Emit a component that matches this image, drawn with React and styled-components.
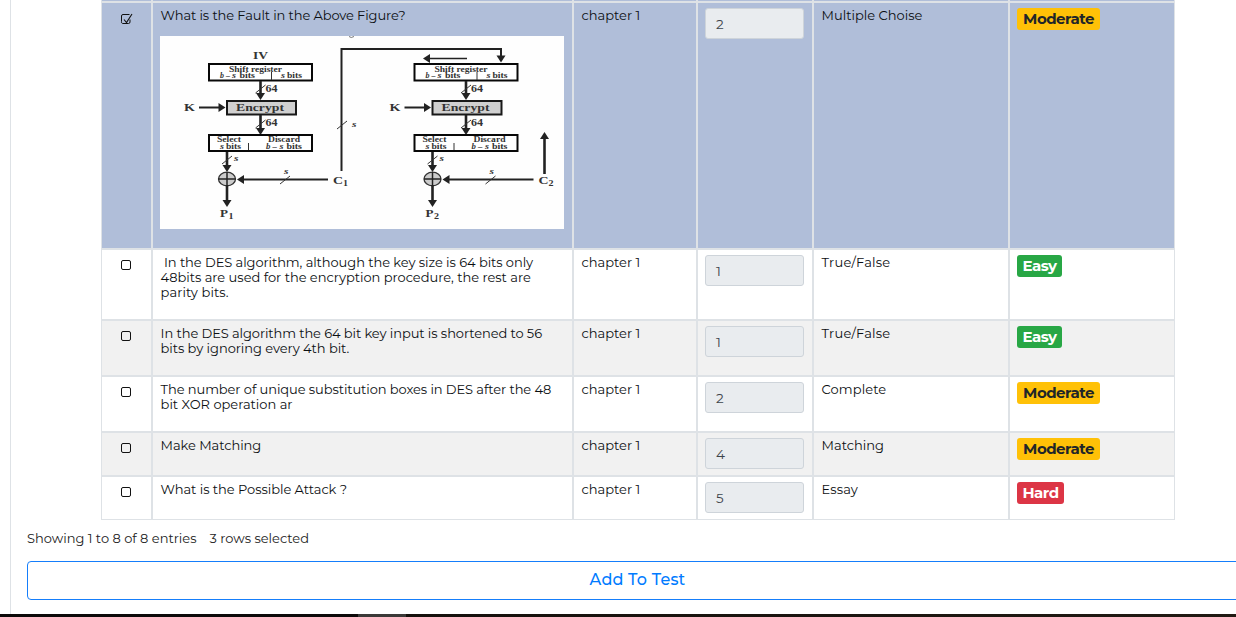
import React from "react";
import styled, { createGlobalStyle } from "styled-components";

const GlobalStyle = createGlobalStyle`
  *, *::before, *::after { box-sizing: border-box; }
  html, body { margin: 0; padding: 0; overflow: hidden; background: #fff; }
  body { font-family: Montserrat, Inter, "Liberation Sans", sans-serif; font-size: 13px; font-weight: 400; line-height: 15px; color: #0c0f12; }
`;

const Page = styled.div`
  width: 1236px;
  height: 617px;
  overflow: hidden;
  display: flex;
  flex-direction: column;
`;

const Card = styled.main`
  flex: 1;
  min-height: 0;
  margin-left: 10px;
  padding-left: 16px;
  border-left: 1px solid #dee2e6;
`;

const Table = styled.div`
  width: 1074px;
  margin-left: 74px;
`;

const PreviousRowEdge = styled.div`
  height: 2px;
  display: grid;
  grid-template-columns: 51px 421px 124px 116px 196px 166px;
  background: #b0bed9;
`;

const EdgeCell = styled.div`
  border: 1px solid #dee2e6;
  border-top: 0;
`;

const Row = styled.div`
  display: grid;
  grid-template-columns: 51px 421px 124px 116px 196px 166px;
  height: ${(p) => p.$height}px;
  background: ${(p) => (p.$selected ? "#b0bed9" : p.$striped ? "#f1f1f1" : "#fff")};
`;

const Cell = styled.div`
  border: 1px solid #dee2e6;
  padding: 5px 7px;
  min-width: 0;
`;

const CheckCell = styled(Cell)`
  padding: 10px 0 0 18px;
`;

const Line = styled.div`
  padding-left: ${(p) => p.$inset ?? 0.6}px;
  white-space: pre;
  letter-spacing: ${(p) => p.$track ?? 0}px;
`;

const ScoreInput = styled.div`
  width: 99px;
  height: 31px;
  padding: 8px 10px;
  border: 1px solid #ced4da;
  border-radius: 3px;
  background: #e9ecef;
  color: #3d444b;
  font-size: 13.5px;
`;

const levelColors = {
  Easy: { bg: "#28a745", fg: "#fff", width: 45 },
  Moderate: { bg: "#ffc107", fg: "#212529", width: 83 },
  Hard: { bg: "#dc3545", fg: "#fff", width: 47 },
};

const Badge = styled.span`
  display: flex;
  align-items: center;
  justify-content: center;
  width: ${(p) => levelColors[p.$level].width}px;
  height: 22px;
  padding-bottom: 1px;
  border-radius: 3px;
  background: ${(p) => levelColors[p.$level].bg};
  color: ${(p) => levelColors[p.$level].fg};
  font-size: 15px;
  font-weight: 700;
  letter-spacing: -0.5px;
`;

const Picture = styled.svg`
  display: block;
  width: 404px;
  height: 193px;
  margin-top: 13px;
  background: #fefefe;
  font-family: "Liberation Serif", serif;
  font-weight: 700;
  letter-spacing: 0;
`;

const CheckIcon = styled.svg`
  display: block;
  width: 13px;
  height: 12px;
`;

const Info = styled.div`
  display: flex;
  gap: 13px;
  margin-top: 11px;
  color: #222;
`;

const AddButton = styled.button`
  display: block;
  width: 1221px;
  height: 39px;
  margin-top: 15px;
  padding: 0 0 2px;
  border: 1px solid #157efb;
  border-radius: 4px;
  background: #fff;
  color: #007bff;
  font: inherit;
  font-size: 16px;
  font-weight: 500;
  letter-spacing: 0.2px;
`;

const Taskbar = styled.footer`
  height: 3px;
  background: linear-gradient(90deg, #0c0909 358px, #3b3938 358px, #3b3938 406px, #15100c 406px, #211a13);
`;

function Checkbox({ checked }) {
  return (
    <CheckIcon viewBox="0 0 13 12" fill="none" stroke="#111">
      {checked ? (
        <>
          <path d="M9.500 1.500H3a1.500 1.500 0 0 0-1.500 1.500v5.500A1.500 1.500 0 0 0 3 10.500h5.500a1.500 1.500 0 0 0 1.500-1.500V6.500" />
          <path d="M4 6.500l2.500 3L12 1" strokeWidth="1.1" />
        </>
      ) : (
        <rect x="1.5" y="0.5" width="9" height="9" rx="1.5" />
      )}
    </CheckIcon>
  );
}

function Label({ x, y, w, size = 8, italic, children }) {
  return (
    <text x={x} y={y} textLength={w} lengthAdjust="spacingAndGlyphs" fontSize={size} fontStyle={italic ? "italic" : "normal"} fill="#333">
      {children}
    </text>
  );
}

function Arrow({ x1, y1, x2, y2, width = 2.6 }) {
  const angle = (Math.atan2(y2 - y1, x2 - x1) * 180) / Math.PI;
  const length = Math.hypot(x2 - x1, y2 - y1);
  return (
    <g transform={`translate(${x1} ${y1}) rotate(${angle})`}>
      <path d={`M0 0H${length - 5}`} stroke="#222" strokeWidth={width} />
      <path d={`M${length} 0l-7 -4.500v9z`} fill="#222" />
    </g>
  );
}

function Slash({ x, y }) {
  return <path d={`M${x - 5} ${y + 4}l10 -8`} stroke="#333" strokeWidth="1" />;
}

function Stage({ offset, index }) {
  return (
    <g transform={`translate(${offset} 0)`}>
      <rect x="49" y="28" width="103" height="16.5" fill="#fff" stroke="#080808" strokeWidth="2" />
      <Label x={69} y={35.5} w={53} size={7.5}>Shift register</Label>
      <Label x={60} y={42} w={10} size={7.4} italic>b –</Label>
      <Label x={72} y={42} w={4} size={7.4} italic>s</Label>
      <Label x={79.500} y={42} w={15.500} size={7.4}>bits</Label>
      <Label x={121} y={42} w={4} size={7.4} italic>s</Label>
      <Label x={127} y={42} w={15} size={7.4}>bits</Label>
      <path d="M111.5 36v8" stroke="#333" />
      <Arrow x1={100.5} y1={45} x2={100.5} y2={64} />
      <Slash x={100.5} y={53} />
      <Label x={105.5} y={56} w={12} size={9.5}>64</Label>
      <Label x={24} y={75} w={11} size={10.5}>K</Label>
      <Arrow x1={39} y1={71.5} x2={65.5} y2={71.5} width={2} />
      <rect x="67" y="65" width="69" height="13.5" fill="#d0d0d0" stroke="#181818" strokeWidth="2" />
      <Label x={76} y={75} w={48} size={10.5}>Encrypt</Label>
      <Arrow x1={100.5} y1={79} x2={100.5} y2={99} />
      <Slash x={100.5} y={88} />
      <Label x={105.5} y={90} w={12} size={9.5}>64</Label>
      <rect x="49" y="99" width="103" height="16" fill="#fff" stroke="#080808" strokeWidth="2" />
      <Label x={57} y={106} w={24} size={7.4}>Select</Label>
      <Label x={60} y={112.5} w={4} size={7.4} italic>s</Label>
      <Label x={66} y={112.5} w={15} size={7.4}>bits</Label>
      <path d="M88.5 107v7" stroke="#333" />
      <Label x={108} y={106} w={32} size={7.4}>Discard</Label>
      <Label x={106} y={112.5} w={11} size={7.4} italic>b –</Label>
      <Label x={119.500} y={112.5} w={4} size={7.4} italic>s</Label>
      <Label x={126.500} y={112.5} w={15.500} size={7.4}>bits</Label>
      <Arrow x1={67} y1={116} x2={67} y2={136} />
      <Slash x={67} y={124} />
      <Label x={74} y={125} w={4.5} size={8.5} italic>s</Label>
      <ellipse cx="67" cy="143" rx="8.5" ry="6.8" fill="#ccc" stroke="#333" strokeWidth="1.3" />
      <path d="M58.5 143h17M67 136v14" stroke="#222" strokeWidth="1.5" />
      <Arrow x1={67} y1={149} x2={67} y2={171} />
      <Arrow x1={168} y1={143.5} x2={77} y2={143.5} width={2.2} />
      <Slash x={125} y={144} />
      <Label x={124} y={138} w={4.5} size={8.5} italic>s</Label>
      <Label x={173} y={148} w={10} size={10.5}>C</Label>
      <Label x={183} y={150} w={5} size={8.5}>{index}</Label>
      <Label x={60} y={181} w={8} size={10.5}>P</Label>
      <Label x={68.5} y={183} w={5} size={8.5}>{index}</Label>
    </g>
  );
}

function FeedbackDiagram() {
  return (
    <Picture viewBox="0 0 404 193">
      <path d="M189 0.5q2 2 5 0" stroke="#777" fill="none" />
      <Label x={93} y={22.5} w={15} size={10.5}>IV</Label>
      <Stage offset={0} index={1} />
      <Stage offset={205.5} index={2} />
      <path d="M181.5 135V13H341v7" stroke="#222" strokeWidth="2" fill="none" />
      <path d="M336.500 19.500h9l-4.500 7z" fill="#222" />
      <Slash x={182} y={89} />
      <Label x={192} y={91} w={4.5} size={8.5} italic>s</Label>
      <Arrow x1={307} y1={22.5} x2={263} y2={22.5} width={1.6} />
      <Arrow x1={384.5} y1={138} x2={384.5} y2={96} />
    </Picture>
  );
}

const rows = [
  { height: 247, selected: true, lines: [["What is the Fault in the Above Figure?", -0.1]], diagram: true, score: 2, type: "Multiple Choise", level: "Moderate" },
  { height: 71, lines: [[" In the DES algorithm, although the key size is 64 bits only", -0.06], ["48bits are used for the encryption procedure, the rest are", -0.02], ["parity bits.", 0.1]], score: 1, type: "True/False", track: 0.2, level: "Easy" },
  { height: 56, striped: true, lines: [["In the DES algorithm the 64 bit key input is shortened to 56", -0.08], ["bits by ignoring every 4th bit.", -0.04]], score: 1, type: "True/False", track: 0.2, level: "Easy" },
  { height: 56, lines: [["The number of unique substitution boxes in DES after the 48", -0.08], ["bit XOR operation ar", 0]], score: 2, type: "Complete", track: 0.1, level: "Moderate" },
  { height: 44, striped: true, lines: [["Make Matching", -0.04]], score: 4, type: "Matching", level: "Moderate" },
  { height: 44, lines: [["What is the Possible Attack ?", -0.05]], score: 5, type: "Essay", track: 0.1, level: "Hard" },
];

export default function App() {
  return (
    <>
      <GlobalStyle />
      <Page>
        <Card>
          <Table>
            <PreviousRowEdge>
              {[0, 1, 2, 3, 4, 5].map((i) => <EdgeCell key={i} />)}
            </PreviousRowEdge>
            {rows.map((row, i) => (
              <Row key={i} $height={row.height} $selected={row.selected} $striped={row.striped}>
                <CheckCell><Checkbox checked={row.selected} /></CheckCell>
                <Cell>
                  {row.lines.map(([text, track]) => <Line key={text} $track={track}>{text}</Line>)}
                  {row.diagram && <FeedbackDiagram />}
                </Cell>
                <Cell><Line>chapter 1</Line></Cell>
                <Cell><ScoreInput>{row.score}</ScoreInput></Cell>
                <Cell><Line $track={row.track}>{row.type}</Line></Cell>
                <Cell><Badge $level={row.level}>{row.level}</Badge></Cell>
              </Row>
            ))}
          </Table>
          <Info>
            <Line $inset={0}>Showing 1 to 8 of 8 entries</Line>
            <Line $inset={0}>3 rows selected</Line>
          </Info>
          <AddButton type="button">Add To Test</AddButton>
        </Card>
        <Taskbar />
      </Page>
    </>
  );
}
